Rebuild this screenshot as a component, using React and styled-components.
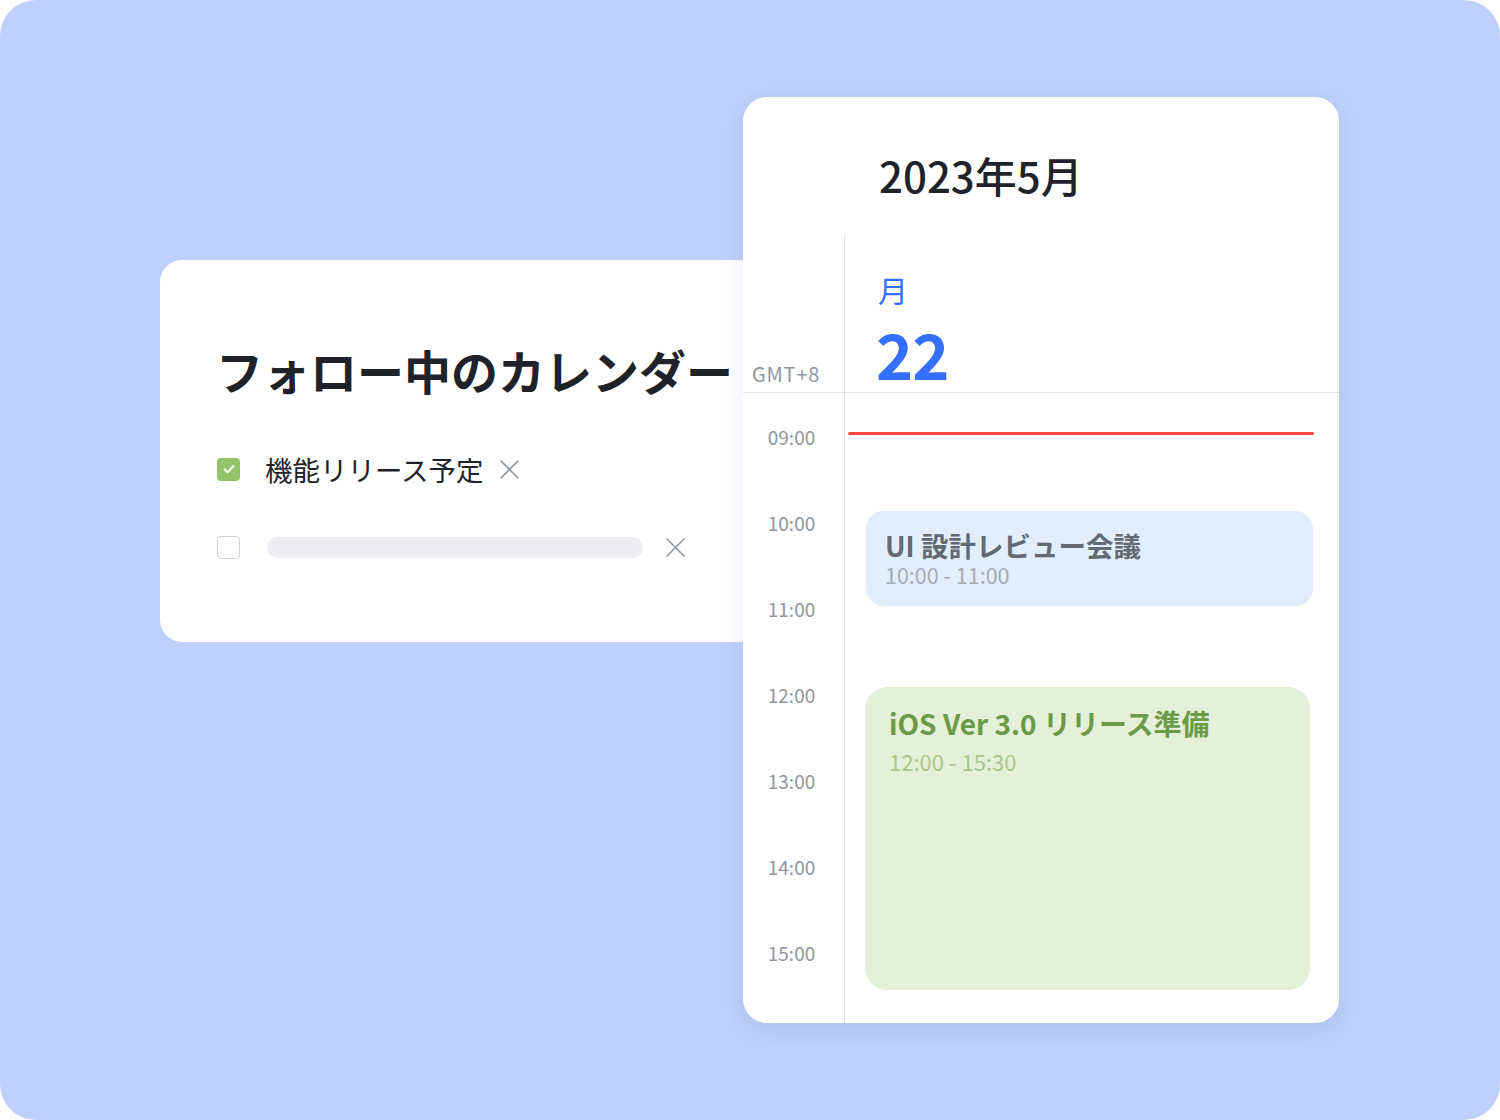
import React from "react";
import styled, { createGlobalStyle } from "styled-components";

const GlobalStyle = createGlobalStyle`
  html, body {
    margin: 0;
    padding: 0;
    background: #ffffff;
  }
  body {
    font-family: "Noto Sans CJK JP", "Noto Sans", sans-serif;
  }
`;

const hours = ["09:00", "10:00", "11:00", "12:00", "13:00", "14:00", "15:00"];

const events = [
  {
    title: "UI 設計レビュー会議",
    time: "10:00 - 11:00",
    top: 118,
    left: 21,
    width: 447,
    height: 95,
    tone: "blue",
  },
  {
    title: "iOS Ver 3.0 リリース準備",
    time: "12:00 - 15:30",
    top: 294,
    left: 20,
    width: 445,
    height: 303,
    tone: "green",
  },
];

const tones = {
  blue: { bg: "#e1eefd", title: "#646a73", time: "#a6abb4", radius: 18, padX: 19, padTop: 18, size: 27.5, titleLine: 32, timeSize: 21.5, line: 28, gap: 0 },
  green: { bg: "#e4f0d7", title: "#6b9a48", time: "#a9c68c", radius: 22, padX: 24, padTop: 18, size: 28, titleLine: 36, timeSize: 22, line: 36, gap: 2 },
};

function CloseIcon() {
  return (
    <svg width="21" height="21" viewBox="0 0 21 21" fill="none">
      <path d="M2 2L19 19M19 2L2 19" stroke="#8f959e" strokeWidth="1.6" strokeLinecap="round" />
    </svg>
  );
}

function App() {
  return (
    <>
      <GlobalStyle />
      <Frame>
        <FollowCard>
          <CardTitle>フォロー中のカレンダー</CardTitle>
          <Row>
            <CheckBox $checked>
              <svg width="14" height="14" viewBox="0 0 14 14" fill="none">
                <path d="M2.5 7.2L5.6 10.2L11.5 4" stroke="#fff" strokeWidth="2" strokeLinecap="round" strokeLinejoin="round" />
              </svg>
            </CheckBox>
            <RowLabel>機能リリース予定</RowLabel>
            <CloseIcon />
          </Row>
          <Row>
            <CheckBox />
            <Placeholder />
            <CloseIcon />
          </Row>
        </FollowCard>

        <CalendarCard>
          <MonthTitle>2023年5月</MonthTitle>
          <Grid>
            <Gutter>
              <GutterHead>GMT+8</GutterHead>
              {hours.map((h) => (
                <HourLabel key={h}>{h}</HourLabel>
              ))}
            </Gutter>
            <DayColumn>
              <DayHead>
                <Weekday>月</Weekday>
                <DayNumber>22</DayNumber>
              </DayHead>
              <DayBody>
                <NowLine />
                {events.map((ev) => (
                  <EventBlock
                    key={ev.title}
                    $tone={ev.tone}
                    $top={ev.top}
                    $left={ev.left}
                    $width={ev.width}
                    $height={ev.height}
                  >
                    <EventTitle $tone={ev.tone}>{ev.title}</EventTitle>
                    <EventTime $tone={ev.tone}>{ev.time}</EventTime>
                  </EventBlock>
                ))}
              </DayBody>
            </DayColumn>
          </Grid>
        </CalendarCard>
      </Frame>
    </>
  );
}

const Frame = styled.div`
  width: 1500px;
  height: 1120px;
  box-sizing: border-box;
  background: #bdcffa;
  border-radius: 36px;
  padding: 97px 0 0 160px;
  display: flex;
  align-items: flex-start;
  overflow: hidden;
`;

const FollowCard = styled.div`
  width: 600px;
  height: 382px;
  margin-top: 163px;
  margin-right: -17px;
  box-sizing: border-box;
  background: #ffffff;
  border-radius: 22px;
  padding: 82px 0 0 57px;
  display: flex;
  flex-direction: column;
  overflow: hidden;
`;

const CardTitle = styled.div`
  font-size: 47px;
  font-weight: 700;
  line-height: 56px;
  color: #1f2329;
  white-space: nowrap;
  margin-left: -1px;
  margin-bottom: 51px;
`;

const Row = styled.div`
  height: 40px;
  display: flex;
  align-items: center;
  margin-bottom: 38px;
`;

const CheckBox = styled.div`
  width: 23px;
  height: 23px;
  box-sizing: border-box;
  border-radius: 4px;
  background: ${(p) => (p.$checked ? "#93c46a" : "#ffffff")};
  border: ${(p) => (p.$checked ? "none" : "1.5px solid #cfd3d9")};
  display: flex;
  align-items: center;
  justify-content: center;
  margin-right: 25px;
  flex-shrink: 0;
`;

const RowLabel = styled.span`
  font-size: 27.5px;
  color: #1f2329;
  line-height: 1;
  margin-right: 15px;
  margin-top: 2px;
`;

const Placeholder = styled.div`
  width: 376px;
  height: 21px;
  border-radius: 11px;
  background: #eceef1;
  margin-left: 2px;
  margin-right: 22px;
`;

const CalendarCard = styled.div`
  position: relative;
  z-index: 1;
  width: 596px;
  height: 926px;
  flex-shrink: 0;
  box-sizing: border-box;
  background: #ffffff;
  border-radius: 24px;
  box-shadow: 0 6px 18px rgba(70, 90, 150, 0.12);
  display: flex;
  flex-direction: column;
  overflow: hidden;
`;

const MonthTitle = styled.div`
  height: 138px;
  box-sizing: border-box;
  padding: 54px 0 0 136px;
  font-size: 42px;
  font-weight: 500;
  line-height: 48px;
  color: #1f2329;
`;

const Grid = styled.div`
  flex: 1;
  display: grid;
  grid-template-columns: 102px 1fr;
`;

const Gutter = styled.div`
  border-right: 1px solid #e1e3e7;
  display: flex;
  flex-direction: column;
`;

const GutterHead = styled.div`
  height: 158px;
  box-sizing: border-box;
  border-bottom: 1px solid #e1e3e7;
  display: flex;
  align-items: flex-end;
  padding: 0 0 4px 9px;
  font-size: 20px;
  color: #8f959e;
  letter-spacing: 0.8px;
`;

const HourLabel = styled.div`
  height: 86px;
  display: flex;
  align-items: center;
  justify-content: center;
  padding-right: 4px;
  font-size: 19px;
  color: #8f959e;
`;

const DayColumn = styled.div`
  display: flex;
  flex-direction: column;
`;

const DayHead = styled.div`
  height: 158px;
  box-sizing: border-box;
  border-bottom: 1px solid #e1e3e7;
  padding: 34px 0 0 31px;
  display: flex;
  flex-direction: column;
  color: #3370ff;
`;

const Weekday = styled.div`
  font-size: 30px;
  line-height: 40px;
  margin-left: 2px;
`;

const DayNumber = styled.div`
  font-size: 63px;
  font-weight: 700;
  line-height: 72px;
  margin-top: 8px;
  letter-spacing: -1px;
`;

const DayBody = styled.div`
  position: relative;
  flex: 1;
`;

const NowLine = styled.div`
  position: absolute;
  top: 39px;
  left: 3px;
  width: 466px;
  height: 3px;
  border-radius: 2px;
  background: #f54a45;
`;

const EventBlock = styled.div`
  position: absolute;
  top: ${(p) => p.$top}px;
  left: ${(p) => p.$left}px;
  width: ${(p) => p.$width}px;
  height: ${(p) => p.$height}px;
  box-sizing: border-box;
  border-radius: ${(p) => tones[p.$tone].radius}px;
  background: ${(p) => tones[p.$tone].bg};
  padding: ${(p) => tones[p.$tone].padTop}px ${(p) => tones[p.$tone].padX}px 0;
`;

const EventTitle = styled.div`
  font-size: ${(p) => tones[p.$tone].size}px;
  font-weight: 700;
  line-height: ${(p) => tones[p.$tone].titleLine}px;
  color: ${(p) => tones[p.$tone].title};
  white-space: nowrap;
`;

const EventTime = styled.div`
  font-size: ${(p) => tones[p.$tone].timeSize}px;
  line-height: ${(p) => tones[p.$tone].line}px;
  margin-top: ${(p) => tones[p.$tone].gap}px;
  color: ${(p) => tones[p.$tone].time};
`;

export default App;
